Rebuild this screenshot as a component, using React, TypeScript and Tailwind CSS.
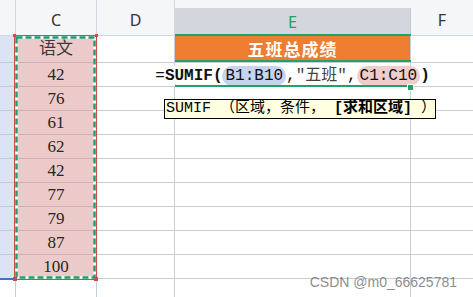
import React from 'react';

const values = ['42', '76', '61', '62', '42', '77', '79', '87', '100'];

const serif = { fontFamily: '"Liberation Serif", "Noto Sans CJK SC", serif' };
const mono = { fontFamily: '"Liberation Mono", "Noto Sans CJK SC", monospace' };

function HeaderRow() {
  return (
    <div className="flex h-[36px] bg-[#f5f6f7] text-[16px] text-[#333]" style={{ fontFamily: '"Noto Sans", sans-serif' }}>
      <div className="w-[16px] shrink-0 border-r border-b border-[#d3d7df]" />
      <div className="w-[81px] shrink-0 border-r border-b border-[#d3d7df] flex items-end justify-center pb-[3px]">C</div>
      <div className="w-[78px] shrink-0 border-r border-b border-[#d3d7df] flex items-end justify-center pb-[3px]">D</div>
      <div className="w-[236px] shrink-0 border-b border-[#d3d7df] pt-[8px]">
        <div className="h-full bg-[#d3d6dc] flex items-center justify-center text-[#20a162] border-r border-[#c4c8d0]">E</div>
      </div>
      <div className="flex-1 border-b border-[#d3d7df] flex items-end justify-center pb-[3px]">F</div>
    </div>
  );
}

function Row({ h, c, e, cText }: { h: string; c: React.ReactNode; e?: React.ReactNode; cText?: string }) {
  return (
    <div className={`flex ${h}`}>
      <div className="w-[16px] shrink-0 bg-[#dbe3f4] border-r border-b border-[#bfc8dc]" />
      <div
        className={`w-[81px] shrink-0 bg-[#edcaca] border-r border-b border-[#cfb0b6] flex items-center justify-center text-[17px] ${cText ?? 'text-[#262626]'}`}
        style={serif}
      >
        {c}
      </div>
      <div className="w-[78px] shrink-0 border-r border-b border-[#c8cdda]" />
      <div className="w-[236px] shrink-0 border-r border-b border-[#c8cdda] relative">{e}</div>
      <div className="flex-1 border-b border-[#c8cdda]" />
    </div>
  );
}

function Formula() {
  return (
    <div className="absolute inset-0 flex items-center justify-center z-10 pt-[2px]">
      <span className="whitespace-nowrap bg-white text-[16px] text-[#111] leading-[20px] flex items-center" style={mono}>
        <span>=</span>
        <span className="font-bold">SUMIF(</span>
        <span className="bg-[#c7d4ee] rounded-full px-[3px]">B1:B10</span>
        <span>,</span>
        <span className="text-[#444]">″五班″</span>
        <span>,</span>
        <span className="bg-[#efcdcd] rounded-full px-[3px]">C1:C10</span>
        <span className="font-bold">)</span>
      </span>
    </div>
  );
}

export default function App() {
  return (
    <div className="relative w-[473px] h-[297px] overflow-hidden bg-white">
      <HeaderRow />
      <Row
        h="h-[27px]"
        c="语文"
        cText="text-[#3a3a3a]"
        e={
          <div className="absolute inset-0 bg-[#ed7d31] flex items-center justify-center text-white font-bold text-[17px] tracking-[1px]" style={{ fontFamily: '"Noto Sans CJK SC", sans-serif' }}>
            五班总成绩
          </div>
        }
      />
      {values.map((v, i) => (
        <Row key={i} h="h-[24px]" c={v} e={i === 0 ? <Formula /> : undefined} />
      ))}
      <div className="flex h-[18px]">
        <div className="w-[16px] shrink-0 border-r border-[#c8cdda]" />
        <div className="w-[81px] shrink-0 border-r border-[#c8cdda]" />
        <div className="w-[78px] shrink-0 border-r border-[#c8cdda]" />
        <div className="w-[236px] shrink-0 border-r border-[#c8cdda]" />
        <div className="flex-1" />
      </div>

      <svg className="absolute inset-0 pointer-events-none z-20" width="473" height="297">
        <line x1="0" y1="279" x2="14" y2="279" stroke="#4a6fc7" strokeWidth="2" />
        <rect x="14.5" y="35.5" width="82" height="244" fill="none" stroke="#d0484a" strokeWidth="1" />
        <rect x="16.5" y="37.5" width="78" height="240" fill="none" stroke="#ffffff" strokeWidth="2.5" />
        <rect x="16.5" y="37.5" width="78" height="240" fill="none" stroke="#1fa06a" strokeWidth="2.5" strokeDasharray="6 3" />
        <rect x="13" y="34" width="3" height="3" fill="#d0484a" />
        <rect x="95" y="34" width="3" height="3" fill="#d0484a" />
        <rect x="13" y="277" width="4" height="4" fill="#d0484a" />
        <rect x="94" y="277" width="4" height="4" fill="#d0484a" />
        <rect x="175" y="34" width="236" height="2" fill="#21a366" />
        <rect x="175" y="60" width="236" height="2" fill="#21a366" />
        <rect x="175" y="85" width="234" height="2" fill="#21a366" />
        <rect x="407.5" y="84.5" width="6" height="6" fill="#21a366" stroke="#ffffff" strokeWidth="1" />
      </svg>

      <div
        className="absolute left-[164px] top-[99px] w-[272px] h-[20px] border border-black bg-[#ffffe1] z-30 pl-[1px] text-[15px] text-black whitespace-pre leading-[18px]"
        style={mono}
      >
        SUMIF （区域，条件， <span className="font-bold">[求和区域]</span> ）
      </div>

      <div
        className="absolute right-[16px] bottom-[8px] text-[14px] text-[#6e6e6e]/80 z-30 leading-none"
        style={{ fontFamily: '"Liberation Sans", Arial, sans-serif' }}
      >
        CSDN @m0_66625781
      </div>
    </div>
  );
}
